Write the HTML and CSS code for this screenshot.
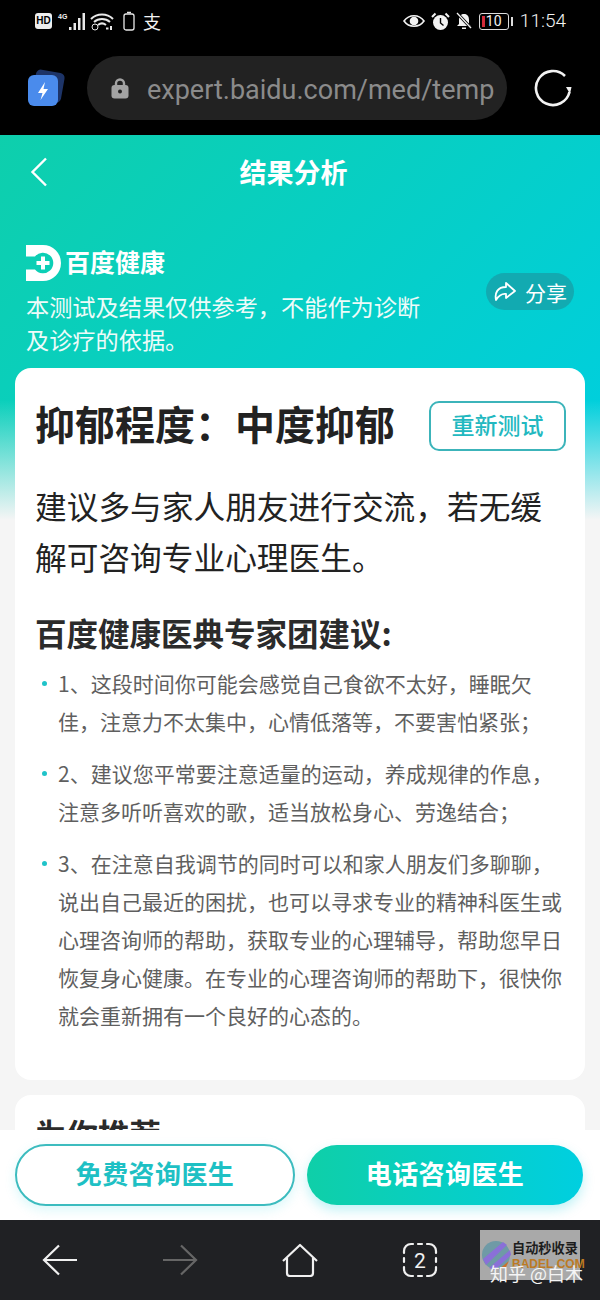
FILE: index.html
```html
<!DOCTYPE html>
<html lang="zh">
<head>
<title>结果分析</title>
<meta charset="utf-8" />
<link rel="stylesheet" href="styles.css">
</head>
<body>
<div class="phone">
  <div class="status">
    <span class="hd">HD</span>
    <span class="net">4G</span>
    <svg class="ic-signal" width="19" height="20" viewBox="0 0 19 20"><path d="M1 16h2.500v3H1zM5.500 12H8v7H5.500zM10 7h2.500v12H10zM14.500 2H17v17h-2.500z" fill="#e8e8e8"/></svg>
    <svg class="ic-wifi" width="26" height="20" viewBox="0 0 26 20" fill="none" stroke="#e8e8e8"><path d="M2 8c6-6 16-6 22 0M5 11c4.500-4 11.500-4 16 0M9 14c2.500-2 5.500-2 8 0" stroke-width="2"/><circle cx="6" cy="16" r="3" stroke-width="1"/><path d="M17 17.500h2.500M22 15v4" stroke-width="2"/></svg>
    <svg class="ic-batt" width="12" height="20" viewBox="0 0 12 20" fill="none"><rect x="1" y="3" width="10" height="16" rx="2" stroke="#e8e8e8" stroke-width="1.300"/><path d="M4 1.500h4" stroke="#e8e8e8" stroke-width="1.500"/></svg>
    <span class="zhi">支</span>
    <div class="status-right">
      <svg width="22" height="16" viewBox="0 0 22 16"><path d="M1 8c5-7 15-7 20 0-5 7-15 7-20 0z" fill="none" stroke="#f2f2f2" stroke-width="1.600"/><circle cx="11" cy="8" r="4.300" fill="#f2f2f2"/></svg>
      <svg width="19" height="19" viewBox="0 0 19 19"><circle cx="9.500" cy="10.500" r="7.500" fill="#f2f2f2"/><path d="M9.500 6v5l3 2.500" fill="none" stroke="#000" stroke-width="1.400"/><path d="M1 5l3.500-3.500M18 5l-3.500-3.500" stroke="#f2f2f2" stroke-width="2"/></svg>
      <svg width="18" height="18" viewBox="0 0 18 18"><path d="M9 2c3.500 0 5 2.500 5 6v4l2 2H2l2-2V8c0-3.500 1.500-6 5-6z" fill="#f2f2f2"/><path d="M7 15.500h4v1.500H7z" fill="#f2f2f2"/><path d="M2 1l14 15" stroke="#000" stroke-width="3"/><path d="M2 1l14 15" stroke="#f2f2f2" stroke-width="1.300"/></svg>
      <div class="batt"><i class="batt-low"></i><span>10</span></div>
      <i class="batt-tip"></i>
      <span class="time">11:54</span>
    </div>
  </div>

  <div class="urlbar">
    <svg class="brand" width="40" height="40" viewBox="0 0 40 40"><rect x="7" y="3" width="29" height="30" rx="5" fill="#1d3468" transform="rotate(10 21 18)"/><rect x="1" y="7" width="30" height="31" rx="6" fill="#4a8bec"/><path d="M18 14l-7 11h4.500l-2 7 7.500-11h-4.500z" fill="#fff"/></svg>
    <div class="url">
      <svg width="18" height="22" viewBox="0 0 18 22"><path d="M5 9V6.500a4 4 0 0 1 8 0V9" fill="none" stroke="#a3a3a3" stroke-width="2.400"/><rect x="0.500" y="8" width="17" height="13.500" rx="3" fill="#a3a3a3"/><circle cx="9" cy="14.500" r="2" fill="#222"/></svg>
      <span class="addr">expert.baidu.com/med/temp</span>
    </div>
    <svg class="reload" width="40" height="40" viewBox="0 0 40 40" fill="none"><path d="M36.500 24A17 17 0 1 1 32 8" stroke="#f2f2f2" stroke-width="2.600"/><path d="M33 19h5.500l-1.500 7z" fill="#f2f2f2"/></svg>
  </div>

  <main class="page">
    <div class="hero">
      <div class="topbar">
        <svg class="back" width="18" height="30" viewBox="0 0 18 30" fill="none"><path d="M16 1.500L2.500 15 16 28.500" stroke="#fff" stroke-width="2.400"/></svg>
        <h1 class="page-title">结果分析</h1>
      </div>
      <div class="brandline">
        <svg width="36" height="36" viewBox="0 0 36 36"><path d="M0 0h17a18 18 0 0 1 0 36H0V24.500h9A10.300 10.300 0 1 0 9 11.500H0zM10.500 16H15v-4.500h4V16h4.500v4H19v4.500h-4V20h-4.500z" fill="#fff"/></svg>
        <span class="brandname">百度健康</span>
      </div>
      <div class="notice">
        <p>本测试及结果仅供参考，不能作为诊断及诊疗的依据。</p>
        <div class="share">
          <svg width="24" height="22" viewBox="0 0 24 22" fill="none"><path d="M13 2l9 8-9 7v-4c-4-.5-7 1-10 6-1.500-7 1.500-13 10-13z" stroke="#fff" stroke-width="1.800" stroke-linejoin="round"/></svg>
          <span>分享</span>
        </div>
      </div>
    </div>

    <section class="card">
      <div class="result">
        <h2>抑郁程度：中度抑郁</h2>
        <a class="retest">重新测试</a>
      </div>
      <p class="advice">建议多与家人朋友进行交流，若无缓解可咨询专业心理医生。</p>
      <h3>百度健康医典专家团建议:</h3>
      <ul class="tips">
        <li>1、这段时间你可能会感觉自己食欲不太好，睡眠欠佳，注意力不太集中，心情低落等，不要害怕紧张；</li>
        <li>2、建议您平常要注意适量的运动，养成规律的作息，注意多听听喜欢的歌，适当放松身心、劳逸结合；</li>
        <li>3、在注意自我调节的同时可以和家人朋友们多聊聊，说出自己最近的困扰，也可以寻求专业的精神科医生或心理咨询师的帮助，获取专业的心理辅导，帮助您早日恢复身心健康。在专业的心理咨询师的帮助下，很快你就会重新拥有一个良好的心态的。</li>
      </ul>
    </section>

    <section class="card card-next">
      <h3>为你推荐</h3>
    </section>
  </main>

  <div class="actions">
    <a class="btn btn-free">免费咨询医生</a>
    <a class="btn btn-call">电话咨询医生</a>
  </div>

  <nav class="nav">
    <svg width="36" height="32" viewBox="0 0 36 32" fill="none" stroke="#f0f0f0" stroke-width="2.200"><path d="M35 16H2M17 1.500L2 16l15 14.500"/></svg>
    <svg width="36" height="32" viewBox="0 0 36 32" fill="none" stroke="#666" stroke-width="2.200"><path d="M1 16h33M19 1.500L34 16 19 30.500"/></svg>
    <svg width="36" height="34" viewBox="0 0 36 34" fill="none" stroke="#f0f0f0" stroke-width="2.200" stroke-linejoin="round"><path d="M1 18L18 2l17 16M5 15v15a3 3 0 0 0 3 3h20a3 3 0 0 0 3-3V15"/></svg>
    <svg width="36" height="36" viewBox="0 0 36 36" fill="none" stroke="#f0f0f0" stroke-width="2.200" stroke-linecap="round">
      <path d="M2 11V9a7 7 0 0 1 7-7h2M25 2h2a7 7 0 0 1 7 7v2M34 25v2a7 7 0 0 1-7 7h-2M11 34H9a7 7 0 0 1-7-7v-2M16 2h4M16 34h4M2 16v4M34 16v4"/>
      <text x="18" y="26" text-anchor="middle" class="tabnum">2</text>
    </svg>
    <div></div>
    <div class="mark">
      <svg width="30" height="34" viewBox="0 0 30 34"><circle cx="15" cy="17" r="14" fill="#6f9aa6"/><path d="M2 21L22 4l4 3L5 27z" fill="#8a70d8"/><path d="M8 30L29 12l1 5-16 15z" fill="#8a70d8"/><path d="M18 31l10-8-3 6z" fill="#c9722c"/></svg>
      <div class="mark-text">
        <b>自动秒收录</b>
        <b class="mark-url">BADEL.COM</b>
      </div>
    </div>
    <div class="credit">知乎 @白木</div>
  </nav>
</div>
</body>
</html>
```

FILE: styles.css
```css
*{
  margin:0;
  padding:0;
  box-sizing:border-box;
}
body{
  background:#000;
  font-family:"Noto Sans CJK SC","Noto Sans",sans-serif;
}
svg{
  flex:none;
}
.phone{
  width:600px;
  height:1300px;
  overflow:hidden;
}

/* status bar */
.status{
  height:56px;
  padding:0 34px 14px 35px;
  display:flex;
  align-items:center;
  color:#f2f2f2;
}
.hd{
  width:17px;
  height:16px;
  background:#eee;
  color:#000;
  border-radius:3px;
  font:bold 10px/16px "Liberation Sans",sans-serif;
  text-align:center;
}
.net{
  margin:-8px 0 0 6px;
  font:bold 7px/8px "Liberation Sans",sans-serif;
  width:10px;
}
.ic-wifi{margin-left:2px;}
.ic-batt{margin-left:8px;}
.zhi{
  margin-left:8px;
  font-size:18px;
  line-height:20px;
}
.status-right{
  margin-left:auto;
  display:flex;
  align-items:center;
  gap:7px;
}
.status-right svg{
  margin-right:-1.500px;
}
.batt{
  width:30px;
  height:17px;
  border:1.500px solid #ddd;
  border-radius:3px;
  display:flex;
  align-items:center;
  padding-left:2px;
  font:14px/14px "Roboto",sans-serif;
}
.batt-low{
  width:3px;
  height:11px;
  background:#d22b3a;
  margin-right:1px;
}
.batt-tip{
  width:2px;
  height:9px;
  background:#ddd;
  margin-left:-5px;
}
.time{
  font:300 19px/24px "Roboto",sans-serif;
}

/* address bar */
.urlbar{
  height:79px;
  padding-left:27px;
  display:flex;
  align-items:flex-start;
}
.brand{margin-top:12px;}
.url{
  width:420px;
  height:64px;
  margin-left:20px;
  padding-left:24px;
  border-radius:32px;
  background:#222;
  display:flex;
  align-items:center;
  gap:18px;
}
.addr{
  font:27px/40px "Roboto",sans-serif;
  color:#8b8b8b;
  white-space:nowrap;
  margin-top:3px;
}
.reload{
  margin:12px 0 0 26px;
}

/* page */
.page{
  height:995px;
  overflow:hidden;
  background:
    linear-gradient(to bottom,rgba(245,245,245,0) 265px,#f5f5f5 385px),
    linear-gradient(135deg,#0ecfac 0,#00cfdc 620px);
  padding:0 15px;
}
.hero{
  height:233px;
  padding:0 11px;
  color:#fff;
}
.topbar{
  height:74px;
  display:flex;
  align-items:center;
  position:relative;
  justify-content:center;
}
.back{
  position:absolute;
  left:4px;
  top:22px;
}
.page-title{
  font-size:27px;
  font-weight:700;
  line-height:74px;
  margin-right:13px;
}
.brandline{
  margin-top:36px;
  display:flex;
  align-items:center;
  gap:3px;
}
.brandname{
  font-size:25px;
  line-height:36px;
  font-weight:700;
  margin-top:-4px;
}
.notice{
  display:flex;
  justify-content:space-between;
  align-items:flex-start;
  margin-top:9px;
}
.notice p{
  width:400px;
  font-size:23.200px;
  line-height:33px;
  color:#eefbf9;
}
.share{
  width:88px;
  height:37px;
  margin:-17px 0 0 0;
  border-radius:19px;
  background:#12aab1;
  display:flex;
  align-items:center;
  justify-content:center;
  gap:8px;
  font-size:21px;
}

.card{
  background:#fff;
  border-radius:16px;
  height:712px;
  padding:33px 20px 0;
}
.result{
  display:flex;
  justify-content:space-between;
  align-items:flex-start;
}
.result h2{
  font-size:40px;
  line-height:45px;
  font-weight:700;
  color:#222;
  white-space:nowrap;
}
.retest{
  width:137px;
  height:50px;
  border:2px solid #3cb4ba;
  border-radius:10px;
  margin-right:-1px;
  color:#22b8c0;
  font-size:23px;
  font-weight:500;
  line-height:42px;
  text-align:center;
}
.advice{
  margin-top:29px;
  font-size:31.700px;
  line-height:51px;
  color:#222;
}
.card h3{
  margin-top:28px;
  font-size:31.500px;
  line-height:44px;
  font-weight:700;
  color:#2b2b2b;
}
.tips{
  margin-top:10px;
  list-style:none;
  color:#5f5f5f;
  font-size:21px;
  line-height:38px;
}
.tips li{
  position:relative;
  padding-left:23px;
  margin-bottom:14px;
}
.tips li::before{
  content:"";
  position:absolute;
  left:7px;
  top:17px;
  width:5px;
  height:5px;
  border-radius:50%;
  background:#1fc3c9;
}
.card-next{
  margin-top:15px;
  padding-top:16px;
}
.card-next h3{
  margin-top:0;
}

/* bottom buttons */
.actions{
  height:90px;
  background:#fff;
  padding:14px 17px 0 15px;
  display:flex;
  justify-content:space-between;
  align-items:flex-start;
}
.btn{
  height:62px;
  border-radius:31px;
  font-size:26px;
  font-weight:700;
  line-height:54px;
  text-align:center;
  letter-spacing:.4px;
}
.btn-free{
  width:280px;
  border:2px solid #3cbcbf;
  color:#1ec0c4;
  box-shadow:0 4px 12px rgba(0,205,220,.15);
}
.btn-call{
  width:276px;
  height:60px;
  margin-top:1px;
  line-height:55px;
  color:#fff;
  background:linear-gradient(90deg,#0fcfa8,#00cfe0);
  box-shadow:0 5px 12px rgba(0,205,220,.25);
}

/* bottom navigation */
.nav{
  height:80px;
  background:#202124;
  display:grid;
  grid-template-columns:repeat(5,120px);
  justify-items:center;
  align-items:center;
  position:relative;
}
.tabnum{
  font:21px "Roboto",sans-serif;
  fill:#f0f0f0;
  stroke:none;
}
.mark{
  position:absolute;
  left:480px;
  top:10px;
  width:100px;
  height:50px;
  background:#a9a9a9;
  display:flex;
  align-items:flex-start;
  padding:8px 0 0 1px;
  gap:1px;
}
.mark-text{
  display:flex;
  flex-direction:column;
  color:#1d1d1d;
  font-size:13.200px;
  line-height:19px;
  white-space:nowrap;
}
.mark-url{
  font:bold 12px/14px "Liberation Sans",sans-serif;
  color:#bd7a22;
}
.credit{
  position:absolute;
  left:490px;
  top:41px;
  color:#f5f5f5;
  font-size:18px;
  line-height:24px;
  white-space:nowrap;
}
```
